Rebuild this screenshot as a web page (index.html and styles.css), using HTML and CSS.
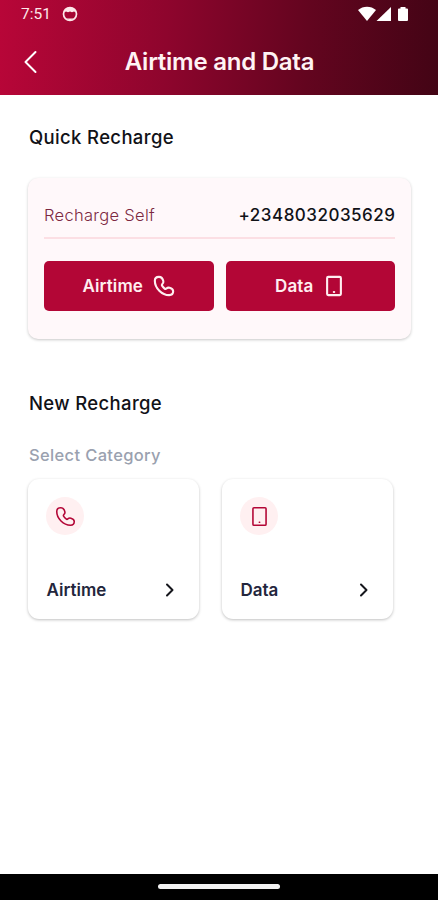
FILE: index.html
```html
<!DOCTYPE html>
<html lang="en">
<head>
<meta charset="utf-8">
<title>Airtime and Data</title>
<link rel="stylesheet" href="styles.css">
</head>
<body>
<svg width="0" height="0" class="defs">
  <symbol id="phone" viewBox="0 0 24 24"><path d="M10.200 9.700c1-.8 1.300-1.700 1.100-2.900C10.700 4 9 2 6.500 2 3.800 2 2 3.800 2 6.300 2 14.300 9.700 22 17.700 22c2.500 0 4.300-1.700 4.300-4.200 0-2.100-1.600-3.300-3.900-3.900-1.500-.4-2.500 0-3.500.9-.6.6-1.300.5-1.900 0-1-.8-1.900-1.700-2.700-2.900-.5-.7-.4-1.600.2-2.200z"/></symbol>
  <symbol id="mobile" viewBox="0 0 24 24"><rect x="4.500" y="2" width="15" height="20" rx="1.200"/><path d="M11.800 18.500h.4"/></symbol>
  <symbol id="chevron" viewBox="0 0 10 14"><path d="M2 1.500 7.500 7 2 12.500"/></symbol>
</svg>
<div class="screen">
  <header class="header">
    <div class="status">
      <span class="time">7:51</span>
      <svg class="face" viewBox="0 0 16 16"><circle cx="8" cy="8" r="6.500" fill="none" stroke="#fde8ea" stroke-width="1.700"/><path d="M2 6.500C2 3 5 1.500 8 1.500S14 3 14 6.500L12 5.500 10 6.300 8 5.500 6 6.300 4 5.500z" fill="#fde8ea"/><path d="M4 12.500h8L8 14.500z" fill="#fde8ea"/></svg>
      <svg class="signals" viewBox="0 0 52 16"><path d="M0 4C5-.5 13-.5 18 4L9 15z"/><path d="M33 1v14H18.500z"/><path d="M40 3.500q0-1 1-1h1.500V1h5v1.500H49q1 0 1 1V14q0 1-1 1h-8q-1 0-1-1z"/></svg>
    </div>
    <div class="titlebar">
      <svg class="back" viewBox="0 0 14 24"><path d="M12.500 2 2.500 12l10 10"/></svg>
      <h1>Airtime and Data</h1>
    </div>
  </header>
  <main>
    <h2 class="quick">Quick Recharge</h2>
    <section class="panel">
      <div class="self"><span class="label">Recharge Self</span><span class="number">+2348032035629</span></div>
      <div class="buttons">
        <button><span>Airtime</span><svg class="icon"><use href="#phone"/></svg></button>
        <button><span>Data</span><svg class="icon"><use href="#mobile"/></svg></button>
      </div>
    </section>
    <h2 class="new">New Recharge</h2>
    <p class="select">Select Category</p>
    <div class="cards">
      <article class="card">
        <div class="badge"><svg><use href="#phone"/></svg></div>
        <div class="row"><span>Airtime</span><svg class="chev"><use href="#chevron"/></svg></div>
      </article>
      <article class="card">
        <div class="badge"><svg><use href="#mobile"/></svg></div>
        <div class="row"><span>Data</span><svg class="chev"><use href="#chevron"/></svg></div>
      </article>
    </div>
  </main>
  <footer><div class="handle"></div></footer>
</div>
</body>
</html>
```
FILE: styles.css
```css
* { box-sizing: border-box; margin: 0; padding: 0; }
body { font-family: Inter, "Liberation Sans", sans-serif; background: #fff; }
svg { display: block; fill: none; stroke: currentColor; stroke-width: 1.800; stroke-linecap: round; stroke-linejoin: round; }
.defs { display: none; }
.screen { width: 438px; height: 900px; display: flex; flex-direction: column; overflow: hidden; }
.header { height: 95px; background: linear-gradient(93deg, #b80638 0%, #8e052d 38%, #63051f 70%, #430415 100%); color: #fff; }
.status { height: 28px; display: flex; align-items: center; padding: 0 28px 0 21px; }
.time { font: 400 15.500px/28px Roboto, sans-serif; color: #fde8ea; width: 41px; }
.face { width: 16px; height: 16px; stroke: none; }
.signals { width: 52px; height: 16px; margin-left: auto; fill: #fff; stroke: none; }
.titlebar { height: 67px; display: grid; grid-template-columns: 60px 1fr 60px; align-items: center; }
.back { width: 14px; height: 24px; margin-left: 23px; stroke-width: 2; }
h1 { font-size: 24px; font-weight: 600; line-height: 30px; text-align: center; white-space: nowrap; letter-spacing: -.25px; padding-left: 1px; color: #fff3f4; }
main { flex: 1; padding: 30px 27px 0 28px; }
h2 { font-size: 18.500px; font-weight: 500; line-height: 24px; color: #111217; letter-spacing: .35px; padding-left: 1px; }
.panel { margin-top: 24px; height: 161px; padding: 16px 16px; border-radius: 10px; background: #fff8fa; box-shadow: 0 1px 3px rgba(0,0,0,.22); }
.self { height: 45px; padding-bottom: 1px; display: flex; justify-content: space-between; align-items: center; border-bottom: 2px solid #fcdfe4; }
.label { font-size: 16.500px; font-weight: 300; color: #7c2841; letter-spacing: .3px; }
.number { font-size: 17px; font-weight: 500; color: #111217; letter-spacing: .5px; margin-right: -.5px; }
.buttons { display: grid; grid-template-columns: 1fr 1fr; gap: 12px; margin-top: 22px; }
button { height: 50px; border: 0; border-radius: 5px; background: #b30636; color: #ffeef0; font: 600 17px/22px Inter, sans-serif; letter-spacing: .1px; display: flex; align-items: center; justify-content: center; gap: 10px; }
.icon { width: 22px; height: 22px; stroke-width: 2.300; }
.panel { margin-top: 29px; }
.new { margin-top: 52px; }
.select { margin-top: 29px; padding-left: 1px; font-size: 16.500px; font-weight: 500; line-height: 22px; color: #9aa1af; letter-spacing: .35px; }
.cards { display: grid; grid-template-columns: 171px 171px; gap: 23px; margin-top: 13px; }
.card { height: 140px; border-radius: 11px; box-shadow: 0 1px 3px rgba(0,0,0,.25); padding: 18px 24px 17px 18px; display: flex; flex-direction: column; justify-content: space-between; }
.badge { width: 38px; height: 38px; border-radius: 50%; background: #fff0f1; color: #b30636; display: flex; align-items: center; justify-content: center; }
.badge svg { width: 21px; height: 21px; }
.row { height: 24px; display: flex; align-items: center; justify-content: space-between; font-size: 17px; font-weight: 600; color: #23263c; }
.row span { padding-left: .5px; }
.chev { width: 10px; height: 14px; stroke-width: 2; color: #15161c; }
footer { height: 26px; background: #000; display: flex; justify-content: center; padding-top: 10px; }
.handle { width: 122px; height: 5px; border-radius: 3px; background: #f2f2f2; }
```
